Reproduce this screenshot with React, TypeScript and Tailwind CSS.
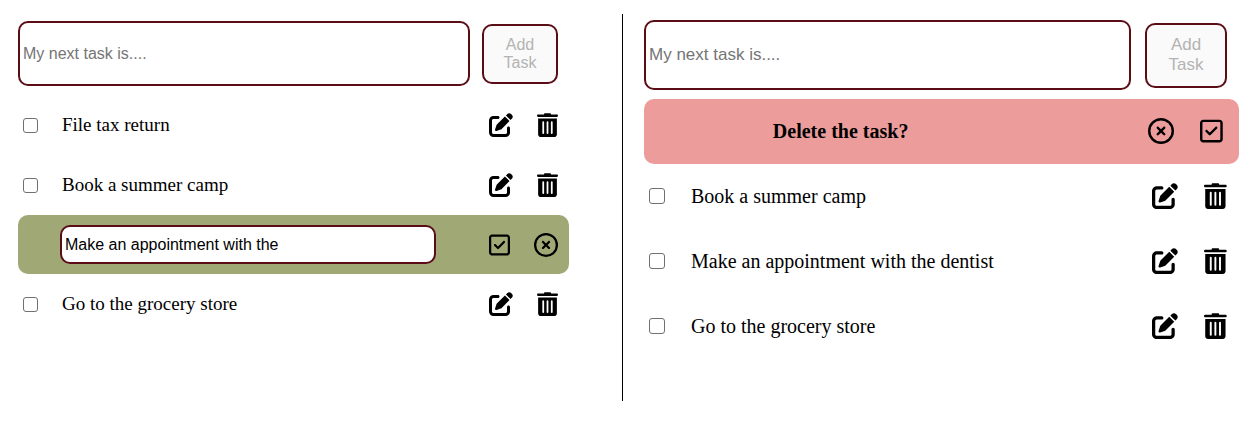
import { useState } from 'react'
import type { ReactNode } from 'react'
import { FaPenToSquare, FaRegCircleXmark, FaRegSquareCheck } from 'react-icons/fa6'

type Size = 'small' | 'large'

const sizes = {
  small: {
    header: 'mb-[9px] flex items-center gap-3 pr-[11px]',
    field: 'h-[65px] min-w-0 flex-1 rounded-[10px] border-2 border-[#5a0d15] bg-white px-[3px] text-[16px] placeholder:text-[#757575]',
    add: 'h-[60px] w-[76px] rounded-[10px] border-2 border-[#5a0d15] bg-[#fafafa] px-3 text-[16px] leading-[18px] text-[#b3b3b3]',
    row: 'flex h-[60px] items-center pl-[5px] pr-[11px]',
    check: 'size-[15px]',
    label: 'ml-6 flex-1 text-[19px]',
    actions: 'flex items-center gap-[24px] text-[24px]',
  },
  large: {
    header: 'mb-[9px] flex items-center gap-[14px] pr-3',
    field: 'h-[70px] min-w-0 flex-1 rounded-[10px] border-2 border-[#5a0d15] bg-white px-[3px] text-[17px] placeholder:text-[#757575]',
    add: 'h-[65px] w-[82px] rounded-[10px] border-2 border-[#5a0d15] bg-[#fafafa] px-3 text-[17px] leading-[20px] text-[#b3b3b3]',
    row: 'flex h-[65px] items-center pb-px pl-[5px] pr-3',
    check: 'size-[16px]',
    label: 'ml-[26px] flex-1 text-[20px]',
    actions: 'flex items-center gap-[26px] text-[26px]',
  },
}

function TrashIcon() {
  return (
    <svg viewBox="0 0 448 512" className="h-[1em] w-[0.875em]" fill="currentColor" aria-hidden="true">
      <path d="M150 26C150 12 160 4 172 4H276C288 4 298 12 298 26V34H424C438 34 448 46 448 59S438 84 424 84H24C10 84 0 72 0 59S10 34 24 34H150Z" />
      <path
        fillRule="evenodd"
        d="M24 118H424V456C424 487 399 512 368 512H80C49 512 24 487 24 456ZM114 190V434C114 445 122 450 133 450S152 445 152 434V190C152 179 144 174 133 174S114 179 114 190ZM205 190V434C205 445 213 450 224 450S243 445 243 434V190C243 179 235 174 224 174S205 179 205 190ZM296 190V434C296 445 304 450 315 450S334 445 334 434V190C334 179 326 174 315 174S296 179 296 190Z"
      />
    </svg>
  )
}

function CheckIcon() {
  return (
    <span className="block w-[0.875em] overflow-hidden">
      <FaRegSquareCheck className="w-full" />
    </span>
  )
}

function IconButton({ label, children }: { label: string; children: ReactNode }) {
  return (
    <button type="button" aria-label={label} className="cursor-pointer">
      {children}
    </button>
  )
}

function NewTask({ size }: { size: Size }) {
  const s = sizes[size]
  const [text, setText] = useState('')
  return (
    <form className={s.header} onSubmit={(e) => e.preventDefault()}>
      <input
        type="text"
        aria-label="New task"
        placeholder="My next task is...."
        value={text}
        onChange={(e) => setText(e.target.value)}
        className={s.field}
      />
      <button type="submit" disabled={text === ''} className={s.add}>
        Add Task
      </button>
    </form>
  )
}

function Task({ size, name }: { size: Size; name: string }) {
  const s = sizes[size]
  const id = `${size}-${name.toLowerCase().replaceAll(' ', '-')}`
  return (
    <li className={s.row}>
      <input
        type="checkbox"
        id={id}
        className={`${s.check} shrink-0 appearance-none rounded-[3px] border border-[#707070] bg-white checked:appearance-auto`}
      />
      <label htmlFor={id} className={`${s.label} font-['Liberation_Serif',serif] text-black`}>
        {name}
      </label>
      <div className={s.actions}>
        <IconButton label={`Edit ${name}`}>
          <FaPenToSquare />
        </IconButton>
        <IconButton label={`Delete ${name}`}>
          <TrashIcon />
        </IconButton>
      </div>
    </li>
  )
}

function EditingTask() {
  const [text, setText] = useState('Make an appointment with the')
  return (
    <li className="flex h-[59px] items-center rounded-[10px] bg-[#a0a975] pl-[42px] pr-[11px]">
      <input
        type="text"
        aria-label="Task name"
        value={text}
        onChange={(e) => setText(e.target.value)}
        className="mr-[53px] h-[39px] min-w-0 flex-1 rounded-[10px] border-2 border-[#5a0d15] bg-white px-[3px] text-[16px] text-black"
      />
      <div className="flex items-center gap-[24px] text-[24px]">
        <IconButton label="Save">
          <CheckIcon />
        </IconButton>
        <IconButton label="Cancel">
          <FaRegCircleXmark />
        </IconButton>
      </div>
    </li>
  )
}

function DeletingTask() {
  return (
    <li className="flex h-[65px] items-center rounded-[10px] bg-[#ed9c9c] pb-px pr-4">
      <strong className="mr-[111px] flex-1 text-center font-['Liberation_Serif',serif] text-[20px] font-bold">
        Delete the task?
      </strong>
      <div className="flex items-center gap-[26px] text-[26px]">
        <IconButton label="Cancel">
          <FaRegCircleXmark />
        </IconButton>
        <IconButton label="Confirm">
          <CheckIcon />
        </IconButton>
      </div>
    </li>
  )
}

export default function App() {
  return (
    <main className="grid grid-cols-[622fr_635fr] bg-white py-[14px] font-['Liberation_Sans',Arial,sans-serif] text-black">
      <section aria-label="Editing a task" className="pl-[18px] pr-[53px] pt-[7px]">
        <NewTask size="small" />
        <ul>
          <Task size="small" name="File tax return" />
          <Task size="small" name="Book a summer camp" />
          <EditingTask />
          <Task size="small" name="Go to the grocery store" />
        </ul>
      </section>
      <section aria-label="Deleting a task" className="min-h-[387px] border-l border-black pl-[21px] pr-[18px] pt-[6px]">
        <NewTask size="large" />
        <ul>
          <DeletingTask />
          <Task size="large" name="Book a summer camp" />
          <Task size="large" name="Make an appointment with the dentist" />
          <Task size="large" name="Go to the grocery store" />
        </ul>
      </section>
    </main>
  )
}
